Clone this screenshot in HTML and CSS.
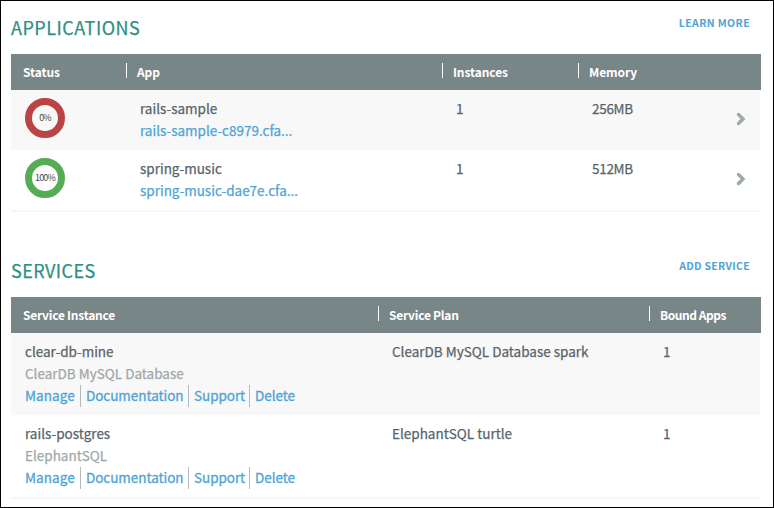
FILE: index.html
```html
<!DOCTYPE html>
<html lang="en">
<head>
<meta charset="utf-8">
<title>Space</title>
<link rel="stylesheet" href="styles.css">
</head>
<body>
<main class="page">
  <section class="panel apps">
    <header class="panel-head"><h2>APPLICATIONS</h2><a class="action">LEARN MORE</a></header>
    <div class="thead"><span>Status</span><span>App</span><span>Instances</span><span>Memory</span></div>
    <div class="row">
      <div class="status"><div class="ring down"><span>0%</span></div></div>
      <div class="cell"><div class="name">rails-sample</div><a class="url">rails-sample-c8979.cfa...</a></div>
      <div class="cell">1</div>
      <div class="cell memory">256MB</div>
      <svg class="chevron" viewBox="0 0 10 14"><path d="M2.5 2.5 7 7 2.5 11.5"/></svg>
    </div>
    <div class="row">
      <div class="status"><div class="ring up"><span>100%</span></div></div>
      <div class="cell"><div class="name">spring-music</div><a class="url">spring-music-dae7e.cfa...</a></div>
      <div class="cell">1</div>
      <div class="cell memory">512MB</div>
      <svg class="chevron" viewBox="0 0 10 14"><path d="M2.5 2.5 7 7 2.5 11.5"/></svg>
    </div>
  </section>
  <section class="panel services">
    <header class="panel-head"><h2>SERVICES</h2><a class="action">ADD SERVICE</a></header>
    <div class="thead"><span>Service Instance</span><span>Service Plan</span><span>Bound Apps</span></div>
    <div class="row">
      <div class="cell">
        <div class="name">clear-db-mine</div><div class="kind">ClearDB MySQL Database</div>
        <nav class="links"><a class="manage">Manage</a><a class="docs">Documentation</a><a class="support">Support</a><a>Delete</a></nav>
      </div>
      <div class="cell plan">ClearDB MySQL Database spark</div>
      <div class="cell">1</div>
    </div>
    <div class="row">
      <div class="cell">
        <div class="name">rails-postgres</div><div class="kind">ElephantSQL</div>
        <nav class="links"><a class="manage">Manage</a><a class="docs">Documentation</a><a class="support">Support</a><a>Delete</a></nav>
      </div>
      <div class="cell plan">ElephantSQL turtle</div>
      <div class="cell">1</div>
    </div>
  </section>
</main>
</body>
</html>
```
FILE: styles.css
```css
* { box-sizing: border-box; }
body {
  margin: 0;
  background: #fff;
  color: #58646a;
  font: 13.5px/22px "Noto Sans CJK SC", "Open Sans", sans-serif;
}
.page {
  width: 774px;
  height: 508px;
  padding: 0 12px 0 10px;
  border: 1px solid #000;
  overflow: hidden;
}
.panel-head {
  display: flex;
  justify-content: space-between;
  height: 53px;
  padding: 12px 11px 0 0;
}
.services .panel-head { height: 87px; padding-top: 46px; }
h2 {
  margin: 0;
  font-size: 18px;
  line-height: 28px;
  font-weight: 400;
  letter-spacing: .5px;
  color: #2f8f83;
  -webkit-text-stroke: .25px #2f8f83;
}
.services h2 { letter-spacing: .4px; }
.action {
  padding-top: 1px;
  font-size: 10.5px;
  line-height: 18px;
  font-weight: 700;
  letter-spacing: .4px;
  color: #4fa4d6;
}
.services .action { letter-spacing: .3px; }
.thead {
  display: grid;
  align-items: start;
  height: 36px;
  padding-top: 9px;
  background: #798688;
  color: #fff;
  font-size: 12px;
  line-height: 18px;
  font-weight: 700;
  letter-spacing: -.1px;
}
.services .thead { letter-spacing: -.25px; }
.services .thead span:last-child { letter-spacing: -.45px; }
.thead span {
  height: 15px;
  padding-left: 10px;
  border-left: 1px solid #fff;
  white-space: nowrap;
}
.thead span:first-child { border: 0; padding-left: 12px; }
.apps .thead, .apps .row { grid-template-columns: 115px 316px 136px 142px 1fr; }
.services .thead, .services .row { grid-template-columns: 367px 271px 1fr; }
.row {
  display: grid;
  width: 749px;
  height: 60px;
  padding-top: 7px;
}
.services .row { height: 82px; }
.thead + .row { background: #f8f8f8; }
.row:last-child { box-shadow: 0 2px #f7f7f7; }
.row .cell, .status { padding-left: 14px; white-space: nowrap; }
.cell { -webkit-text-stroke: .25px currentColor; }
.memory { letter-spacing: -.3px; }
.ring {
  display: flex;
  align-items: center;
  justify-content: center;
  width: 40px;
  height: 40px;
  margin-top: 1px;
  border: 7px solid;
  border-radius: 50%;
  background: #fff;
  font-size: 9px;
  line-height: 12px;
  letter-spacing: -.8px;
}
.ring span { color: #444; }
.down { border-color: #b94443; }
.up { border-color: #54ad52; }
.thead + .row .ring { background: #f8f8f8; }
.url, .links { color: #4fa4d6; }
.kind { color: #a1a7a9; }
.chevron {
  width: 10px;
  height: 14px;
  margin: 15px 0 0 16px;
  fill: none;
  stroke: #9ea9ab;
  stroke-width: 3.4;
  stroke-linecap: round;
}
.links {
  display: flex;
  height: 22px;
  margin-top: 1px;
  line-height: 20px;
  letter-spacing: -.05px;
  -webkit-text-stroke-width: .3px;
}
.links a + a { padding-left: 5px; border-left: 1px solid #b5b9ba; }
.manage { width: 55px; letter-spacing: .1px; }
.docs { width: 108px; }
.support { width: 61px; }
```
